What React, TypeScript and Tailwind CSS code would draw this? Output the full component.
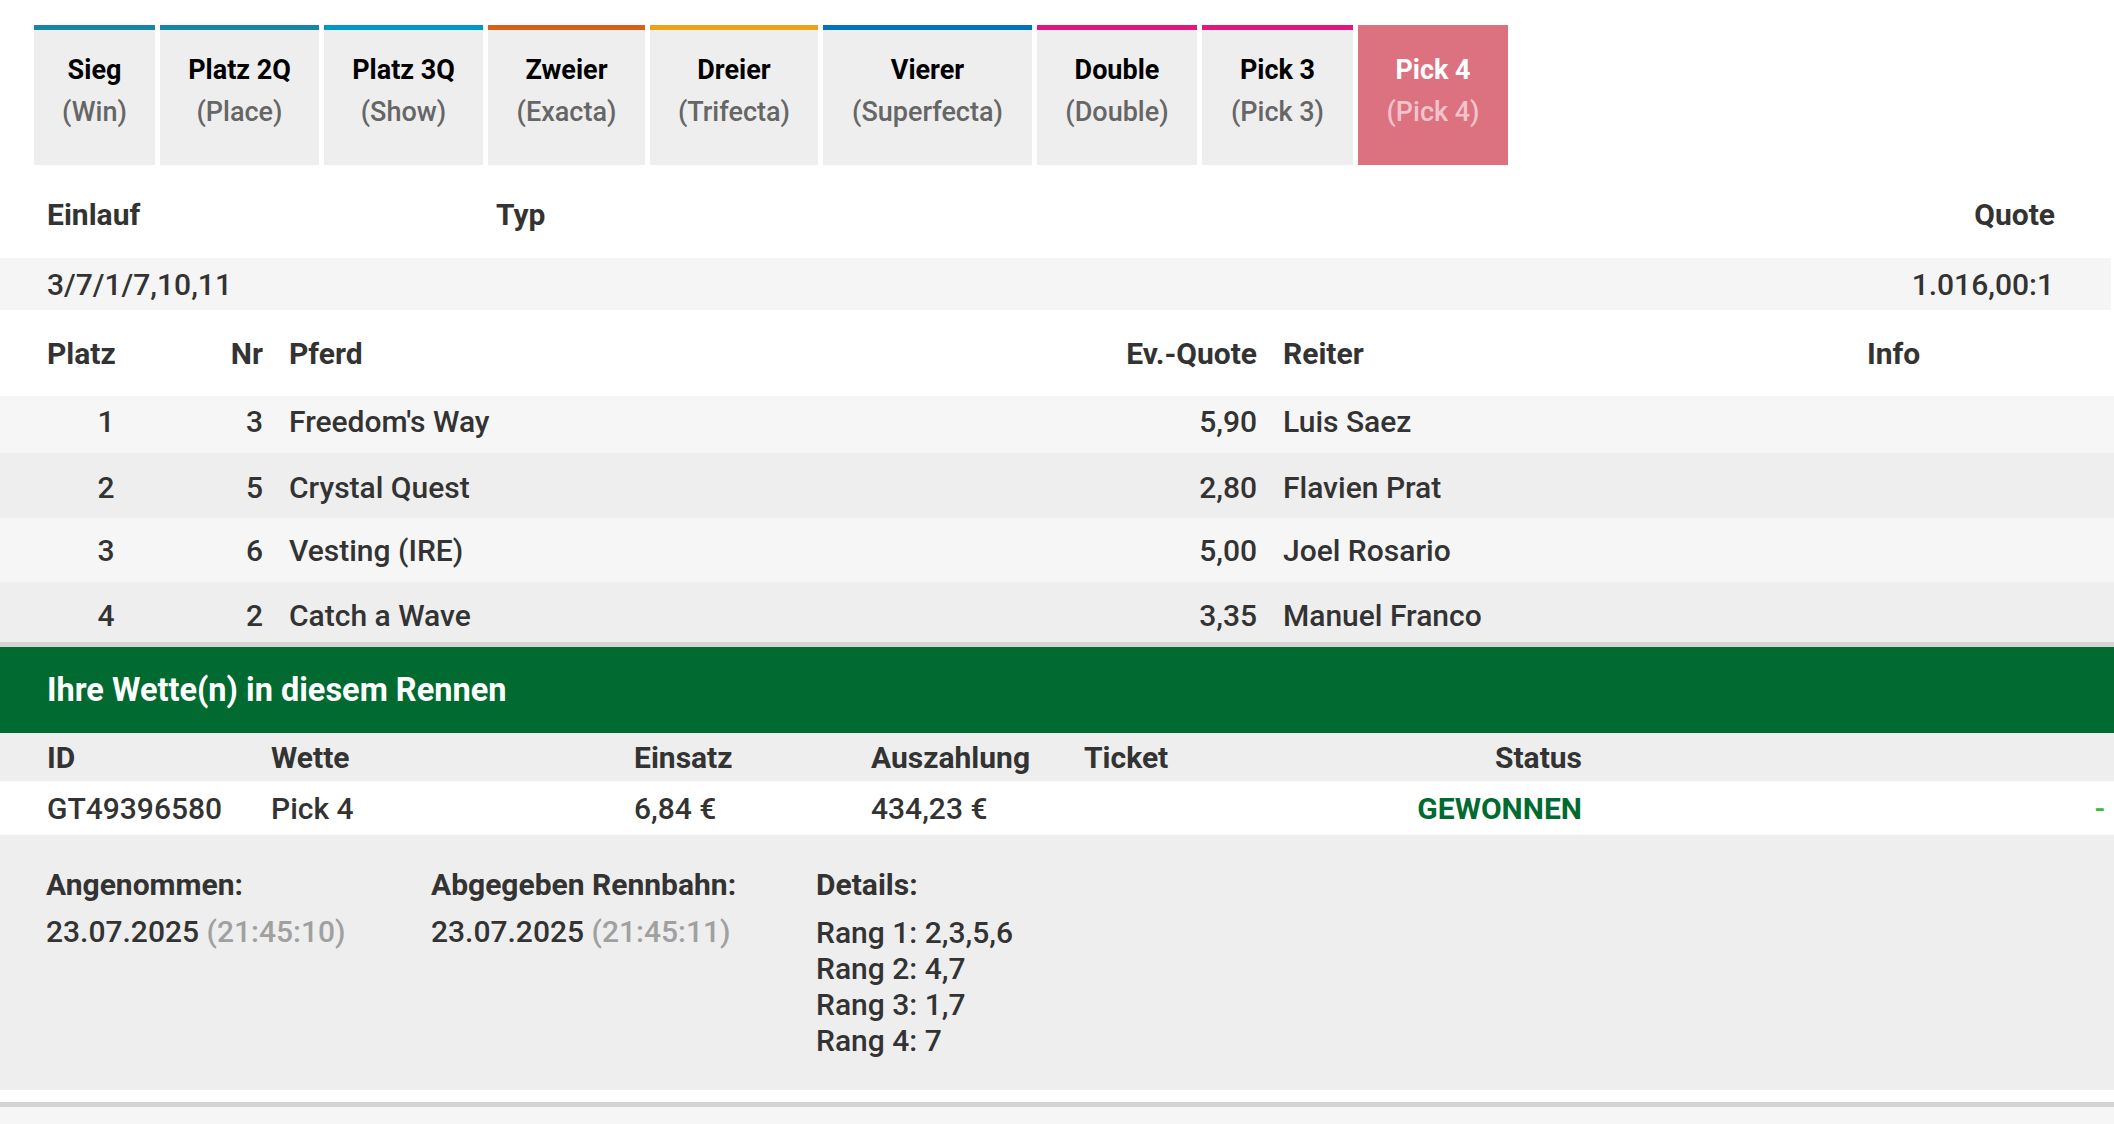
import React from "react";

const tabs = [
  { t: "Sieg", s: "(Win)", cls: "w-[121px] border-t-[#1786a6]" },
  { t: "Platz 2Q", s: "(Place)", cls: "w-[159px] border-t-[#1786a6]" },
  { t: "Platz 3Q", s: "(Show)", cls: "w-[159px] border-t-[#0097c7]" },
  { t: "Zweier", s: "(Exacta)", cls: "w-[157px] border-t-[#d8611a]" },
  { t: "Dreier", s: "(Trifecta)", cls: "w-[168px] border-t-[#eba319]" },
  { t: "Vierer", s: "(Superfecta)", cls: "w-[209px] border-t-[#0076b8]" },
  { t: "Double", s: "(Double)", cls: "w-[160px] border-t-[#e0187b]" },
  { t: "Pick 3", s: "(Pick 3)", cls: "w-[151px] border-t-[#e0187b]" },
];

const results = [
  { p: "1", nr: "3", horse: "Freedom's Way", q: "5,90", rider: "Luis Saez", cls: "h-[57px] pb-[6px] bg-[#f6f6f6]" },
  { p: "2", nr: "5", horse: "Crystal Quest", q: "2,80", rider: "Flavien Prat", cls: "h-[65px] pt-[3px] bg-[#eeeeee]" },
  { p: "3", nr: "6", horse: "Vesting (IRE)", q: "5,00", rider: "Joel Rosario", cls: "h-[64px] bg-[#f6f6f6]" },
  { p: "4", nr: "2", horse: "Catch a Wave", q: "3,35", rider: "Manuel Franco", cls: "h-[60px] pt-[6px] bg-[#eeeeee]" },
];

export default function App() {
  return (
    <div className="w-[2114px] min-h-[1124px] bg-white font-['Roboto',sans-serif] font-medium text-[#333333]">
      {/* Tabs */}
      <div className="flex gap-[5px] pl-[34px] pt-[25px]">
        {tabs.map((tab) => (
          <div
            key={tab.t}
            className={`h-[140px] border-t-[5px] bg-[#eeeeee] pt-[19px] text-center text-[27px] leading-[42px] ${tab.cls}`}
          >
            <div className="font-bold text-black">{tab.t}</div>
            <div className="text-[#666666]">{tab.s}</div>
          </div>
        ))}
        <div className="h-[140px] w-[150px] bg-[#dc717f] pt-[24px] text-center text-[27px] leading-[42px]">
          <div className="font-bold text-white">Pick 4</div>
          <div className="text-[#f2c3cb]">(Pick 4)</div>
        </div>
      </div>

      {/* Einlauf table */}
      <div className="w-[2111px] text-[30px]">
        <div className="flex h-[93px] items-center pl-[47px] pr-[56px] pt-[5px] font-bold">
          <div className="w-[449px]">Einlauf</div>
          <div className="flex-1">Typ</div>
          <div>Quote</div>
        </div>
        <div className="flex h-[52px] items-center bg-[#f5f5f5] pl-[47px] pr-[57px]">
          <div className="w-[449px]">3/7/1/7,10,11</div>
          <div className="flex-1"></div>
          <div>1.016,00:1</div>
        </div>
      </div>

      {/* Results table */}
      <div className="text-[30px]">
        <div className="flex h-[86px] items-center pl-[47px] font-bold">
          <div className="w-[118px]">Platz</div>
          <div className="w-[98px] text-right">Nr</div>
          <div className="ml-[26px] w-[811px]">Pferd</div>
          <div className="w-[157px] text-right">Ev.-Quote</div>
          <div className="ml-[26px] w-[584px]">Reiter</div>
          <div>Info</div>
        </div>
        {results.map((r) => (
          <div key={r.p} className={`flex items-center pl-[47px] ${r.cls}`}>
            <div className="w-[118px] text-center">{r.p}</div>
            <div className="w-[98px] text-right">{r.nr}</div>
            <div className="ml-[26px] w-[811px]">{r.horse}</div>
            <div className="w-[157px] text-right">{r.q}</div>
            <div className="ml-[26px] w-[584px]">{r.rider}</div>
            <div></div>
          </div>
        ))}
        <div className="h-[5px] bg-[#d4d4d4]"></div>
      </div>

      {/* Bets */}
      <div className="flex h-[86px] items-center bg-[#006a31] pl-[47px] text-[32.5px] font-bold text-white">
        Ihre Wette(n) in diesem Rennen
      </div>
      <div className="text-[30px]">
        <div className="flex h-[48px] items-center bg-[#eeeeee] pl-[47px] font-bold">
          <div className="w-[224px]">ID</div>
          <div className="w-[363px]">Wette</div>
          <div className="w-[237px]">Einsatz</div>
          <div className="w-[213px]">Auszahlung</div>
          <div className="w-[316px]">Ticket</div>
          <div className="w-[182px] text-right">Status</div>
        </div>
        <div className="flex h-[54px] items-center bg-white pl-[47px] pr-[9px]">
          <div className="w-[224px]">GT49396580</div>
          <div className="w-[363px]">Pick 4</div>
          <div className="w-[237px]">6,84 €</div>
          <div className="w-[213px]">434,23 €</div>
          <div className="w-[316px]"></div>
          <div className="w-[182px] text-right font-bold text-[#006a31]">GEWONNEN</div>
          <div className="flex-1 text-right text-[#3cb83c]">-</div>
        </div>
        <div className="flex h-[255px] bg-[#eeeeee] pl-[46px] pt-[32px] leading-[36px]">
          <div className="w-[385px]">
            <div className="font-bold">Angenommen:</div>
            <div className="mt-[11px]">
              23.07.2025 <span className="text-[#a0a0a0]">(21:45:10)</span>
            </div>
          </div>
          <div className="w-[385px]">
            <div className="font-bold">Abgegeben Rennbahn:</div>
            <div className="mt-[11px]">
              23.07.2025 <span className="text-[#a0a0a0]">(21:45:11)</span>
            </div>
          </div>
          <div>
            <div className="font-bold">Details:</div>
            <div className="mt-[12px]">
              <div>Rang 1: 2,3,5,6</div>
              <div>Rang 2: 4,7</div>
              <div>Rang 3: 1,7</div>
              <div>Rang 4: 7</div>
            </div>
          </div>
        </div>
        <div className="h-[12px] bg-white"></div>
        <div className="h-[5px] bg-[#d4d4d4]"></div>
        <div className="h-[17px] bg-[#f6f6f6]"></div>
      </div>
    </div>
  );
}
